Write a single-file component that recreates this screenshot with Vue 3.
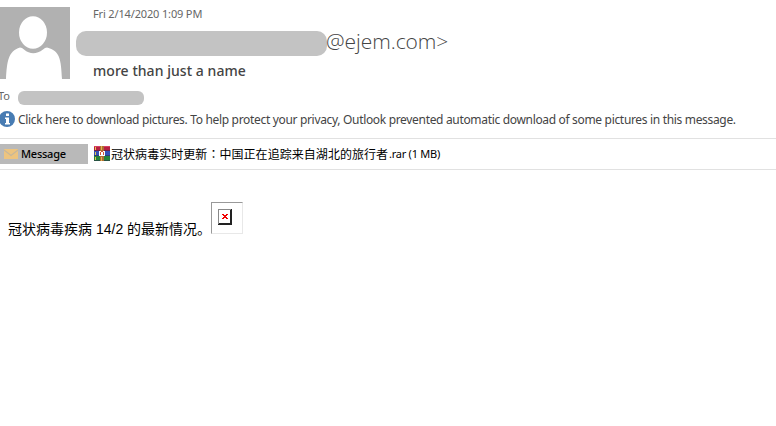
<script setup>
const attachment = { before: '冠状病毒实时更新', colon: '：', after: '中国正在追踪来自湖北的旅行者', ext: '.rar (1 MB)' }
</script>

<template>
  <main class="mail">
    <header class="head">
      <svg class="avatar" viewBox="0 0 70 72">
        <rect width="70" height="72" fill="#b1b1b1" />
        <ellipse cx="33" cy="25.5" rx="14" ry="16.2" fill="#fff" />
        <path d="M6 72C7 55 8 44 20 40.5Q22 40.5 24 42.5Q33 50 43 42.5Q45 40.5 47 40.5C60 44 61 52 62 72Z" fill="#fff" />
      </svg>
      <div class="meta">
        <div class="date">Fri 2/14/2020 1:09 PM</div>
        <div class="sender"><span class="mask mask-from"></span><span class="domain">@ejem.com&gt;</span></div>
        <div class="subject">more than just a name</div>
      </div>
    </header>
    <div class="to"><span class="to-label">To</span><span class="mask mask-to"></span></div>
    <div class="info">
      <svg class="info-icon" viewBox="0 0 16 16">
        <circle cx="7" cy="8" r="8" fill="#487cb3" />
        <path d="M6 2.5h3v2.5H6zM5 6.5h4v5.5h1v1.5H5V12h1V8H5z" fill="#fff" />
      </svg>
      <span class="info-text">Click here to download pictures. To help protect your privacy, Outlook prevented automatic download of some pictures in this message.</span>
    </div>
    <div class="attachments">
      <div class="tab">
        <svg class="envelope" viewBox="0 0 14 10">
          <rect width="14" height="10" fill="#edc47f" />
          <path d="M0 1L7 6.5L14 1" fill="none" stroke="#c5b79d" stroke-width="1.2" />
        </svg>
        <span class="tab-text">Message</span>
      </div>
      <svg class="rar" viewBox="0 0 16 15" shape-rendering="crispEdges">
        <rect width="16" height="5" fill="#b51f43" />
        <rect y="5" width="16" height="5" fill="#3451b5" />
        <rect y="10" width="16" height="5" fill="#25833a" />
        <path d="M0 0h16v1H0z" fill="#d84060" />
        <path d="M0 4h16v1H0zM0 9h16v1H0zM0 14h16v1H0z" fill="#292349" opacity=".5" />
        <path d="M1 1h1v3H1zM1 6h1v3H1zM1 11h1v3H1z" fill="#e9c84e" />
        <path d="M6 0h4v15H6z" fill="#ad6d33" />
        <path d="M7 0h1v4H7zM7 11h1v4H7z" fill="#e3b64d" />
        <path d="M5 5h6v5H5z" fill="#fff" />
        <path d="M7 5h2v1h1v3H9V6H7v3H6V6h1z" fill="#d65435" />
      </svg>
      <span class="file"><span class="cjk">{{ attachment.before }}<span class="colon">{{ attachment.colon }}</span>{{ attachment.after }}</span><span class="ext">{{ attachment.ext }}</span></span>
    </div>
    <section class="body">
      <span class="body-cjk first">冠状病毒疾病</span>
      <span class="body-num">14/2</span>
      <span class="body-cjk last">的最新情况。</span>
      <span class="missing">
        <svg class="broken" viewBox="0 0 14 16" shape-rendering="crispEdges">
          <rect width="14" height="16" fill="#222" />
          <rect width="13" height="15" fill="#888" />
          <rect x="1" y="1" width="11" height="13" fill="#fff" />
          <path d="M12 1h1v14H1v-1h11z" fill="#222" />
          <path d="M4 5h2v1h2V5h2v1H9v1H8v1h1v1h1v1H8V9H6v1H4V9h1V8h1V7H5V6H4z" fill="#f00000" />
        </svg>
      </span>
    </section>
  </main>
</template>

<style>
body { margin: 0; background: #fff; overflow: hidden; }
</style>

<style scoped>
.mail { width: 776px; height: 426px; overflow: hidden; background: #fff; color: #444; font-family: "Noto Sans", "Open Sans", "Noto Sans CJK SC", sans-serif; font-size: 12px; white-space: nowrap; }
.mail * { box-sizing: border-box; }
.mail svg { display: block; flex: none; }
.head { display: flex; height: 88px; padding-top: 7px; }
.avatar { width: 70px; height: 72px; }
.meta { padding-left: 6px; }
.date { height: 24px; padding-left: 17px; font-size: 11px; line-height: 14px; letter-spacing: -0.15px; color: #666; }
.sender { display: flex; height: 25px; }
.mask { display: block; flex: none; background: #c3c3c3; }
.mask-from { width: 251px; height: 25px; border-radius: 10px; }
.domain { margin-left: -1px; font-family: "Open Sans", sans-serif; font-weight: 300; font-size: 21px; line-height: 20px; letter-spacing: -0.05px; color: #444; }
.subject { padding-left: 17px; font-size: 14px; line-height: 30px; font-weight: 500; letter-spacing: 0.05px; color: #444; }
.to { display: flex; height: 22px; }
.to-label { width: 18px; margin-left: -2px; margin-right: 2px; font-size: 11px; line-height: 16px; color: #666; }
.mask-to { width: 126px; height: 14px; margin-top: 3px; border-radius: 6px; }
.info { display: flex; height: 28px; }
.info-icon { width: 16px; height: 16px; margin-top: 1px; }
.info-text { padding-left: 2px; font-size: 12px; line-height: 20px; letter-spacing: -0.325px; }
.attachments { display: flex; height: 32px; padding-top: 5px; border-top: 1px solid #e1e1e1; border-bottom: 1px solid #e1e1e1; color: #000; font-size: 11px; }
.tab { display: flex; flex: none; width: 88px; height: 20px; padding-left: 4px; background: #b9b9b9; }
.envelope { width: 14px; height: 10px; margin-top: 5px; }
.tab-text { padding-left: 3px; line-height: 20px; font-weight: 500; letter-spacing: -0.25px; }
.rar { width: 16px; height: 15px; margin: 2px 1px 0 6px; }
.file { display: flex; line-height: 20px; }
.cjk { width: 277px; font-family: "Noto Sans CJK SC", sans-serif; font-size: 12px; letter-spacing: 0.05px; }
.colon { font-family: "Noto Sans CJK TC", sans-serif; }
.ext { padding-left: 1px; letter-spacing: -0.25px; }
.body { display: flex; height: 80px; padding: 32px 0 0 8px; color: #000; font-size: 14px; }
.body-cjk { padding-top: 16px; font-family: "Noto Sans CJK SC", sans-serif; line-height: 20px; }
.first { width: 88px; }
.body-num { width: 31px; padding-top: 17px; font-family: "Liberation Sans", Arial, sans-serif; line-height: 20px; }
.last { width: 84px; }
.missing { width: 32px; height: 32px; padding: 6px; border: 1px solid #e8e8e8; border-top-color: #999; border-left-color: #999; }
.broken { width: 14px; height: 16px; }
</style>
